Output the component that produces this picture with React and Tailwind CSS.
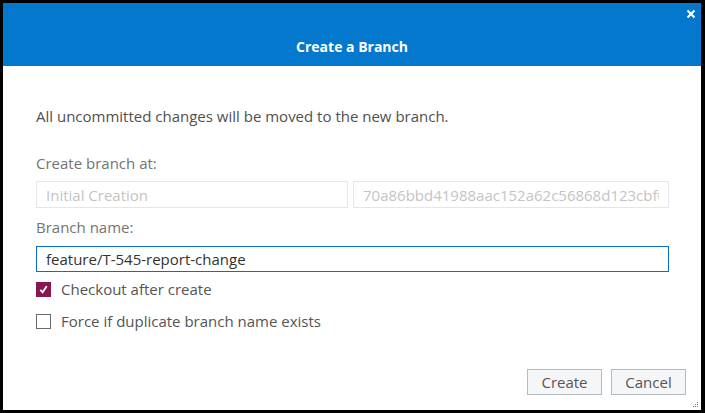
import React, { useState } from 'react';

const font = { fontFamily: '"Open Sans", Lato, sans-serif' };

const Check = ({ checked, onChange, label }) => (
    <label className="flex items-center gap-[10px] h-[20px] cursor-pointer">
        <span
            onClick={onChange}
            className={
                checked
                    ? 'flex items-center justify-center w-[15px] h-[15px] bg-[#8a1650] border border-[#8a1650]'
                    : 'flex items-center justify-center w-[15px] h-[15px] bg-white border border-[#6b6b6b]'
            }
        >
            {checked && (
                <svg width="11" height="11" viewBox="0 0 12 12">
                    <path d="M2.5 6.5 L5 9 L9.5 2.5" fill="none" stroke="white" strokeWidth="2" />
                </svg>
            )}
        </span>
        <span className="text-[15px] text-[#555]">{label}</span>
    </label>
);

const App = () => {
    const [name, setName] = useState('feature/T-545-report-change');
    const [checkout, setCheckout] = useState(true);
    const [force, setForce] = useState(false);

    return (
        <div className="w-[705px] h-[413px] bg-black pt-[3px] pl-[3px] pr-[4px] pb-[3px]" style={font}>
            <div className="relative flex flex-col h-full bg-white">
                {/* Header */}
                <div className="relative h-[63px] bg-[#0378cd] pt-[34px] text-center">
                    <h1 className="text-[14px] leading-[20px] font-bold text-white">Create a Branch</h1>
                    <button className="absolute top-[6px] right-[5px] text-white">
                        <svg width="10" height="10" viewBox="0 0 10 10">
                            <path d="M1.5 1.5 L8.5 8.5 M8.5 1.5 L1.5 8.5" stroke="white" strokeWidth="2" />
                        </svg>
                    </button>
                </div>

                {/* Body */}
                <div className="flex-1 pl-[33px] pr-[32px]">
                    <p className="mt-[40px] text-[15px] leading-[20px] text-[#505050]">
                        All uncommitted changes will be moved to the new branch.
                    </p>

                    <p className="mt-[27px] text-[15px] leading-[20px] text-[#737373]">Create branch at:</p>
                    <div className="mt-[8px] flex gap-[5px]">
                        <input
                            disabled
                            value="Initial Creation"
                            className="w-[312px] h-[27px] px-[9px] border border-[#e6e6e6] bg-white text-[15px] text-[#c4c4c4]"
                        />
                        <input
                            disabled
                            value="70a86bbd41988aac152a62c56868d123cbf0"
                            className="flex-1 min-w-0 h-[27px] px-[9px] border border-[#e6e6e6] bg-white text-[15px] text-[#c4c4c4]"
                        />
                    </div>

                    <p className="mt-[9px] text-[15px] leading-[20px] text-[#737373]">Branch name:</p>
                    <input
                        value={name}
                        onChange={(e) => setName(e.target.value)}
                        className="mt-[9px] block w-full h-[26px] px-[9px] border border-[#0a6fc7] text-[15px] text-[#333] outline-none"
                    />

                    <div className="mt-[7px] flex flex-col gap-[12px]">
                        <Check checked={checkout} onChange={() => setCheckout(!checkout)} label="Checkout after create" />
                        <Check checked={force} onChange={() => setForce(!force)} label="Force if duplicate branch name exists" />
                    </div>
                </div>

                {/* Footer */}
                <div className="flex justify-end gap-[9px] pr-[15px] pb-[15px]">
                    <button className="w-[75px] h-[26px] border border-[#b4bac2] bg-[#f5f6f8] text-[15px] text-[#555]">
                        Create
                    </button>
                    <button className="w-[75px] h-[26px] border border-[#b4bac2] bg-[#f5f6f8] text-[15px] text-[#555]">
                        Cancel
                    </button>
                </div>

                {/* resize grip */}
                <svg className="absolute right-[2px] bottom-[2px]" width="6" height="6" viewBox="0 0 6 6">
                    <rect x="4" y="0" width="1" height="1" fill="#777" />
                    <rect x="2" y="2" width="1" height="1" fill="#777" />
                    <rect x="4" y="2" width="1" height="1" fill="#777" />
                    <rect x="0" y="4" width="1" height="1" fill="#777" />
                    <rect x="2" y="4" width="1" height="1" fill="#777" />
                    <rect x="4" y="4" width="1" height="1" fill="#777" />
                </svg>
            </div>
        </div>
    );
};

export default App;
